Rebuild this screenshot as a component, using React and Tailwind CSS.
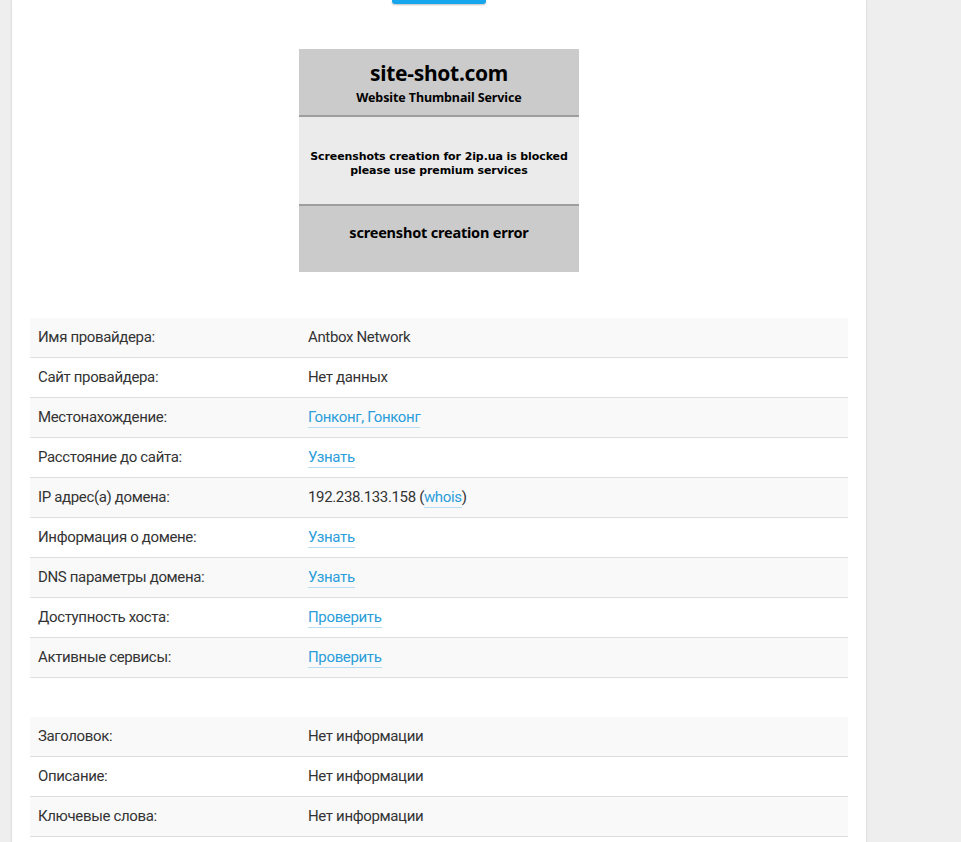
import React from 'react';

const provider = [
  ['Имя провайдера:', 'Antbox Network'],
  ['Сайт провайдера:', 'Нет данных'],
  ['Местонахождение:', { link: 'Гонконг, Гонконг' }],
  ['Расстояние до сайта:', { link: 'Узнать' }],
  ['IP адрес(а) домена:', { ip: '192.238.133.158' }],
  ['Информация о домене:', { link: 'Узнать' }],
  ['DNS параметры домена:', { link: 'Узнать' }],
  ['Доступность хоста:', { link: 'Проверить' }],
  ['Активные сервисы:', { link: 'Проверить' }],
];

const meta = [
  ['Заголовок:', 'Нет информации'],
  ['Описание:', 'Нет информации'],
  ['Ключевые слова:', 'Нет информации'],
];

function Link({ children }) {
  return (
    <a href="#" className="text-[#2b9dda] border-b border-[#b9def2] pb-[1px] leading-[18px]">
      {children}
    </a>
  );
}

function Value({ v }) {
  if (typeof v === 'string') return <span>{v}</span>;
  if (v.link) return <Link>{v.link}</Link>;
  return (
    <span>
      {v.ip} (<Link>whois</Link>)
    </span>
  );
}

function InfoTable({ rows }) {
  return (
    <div className="w-full">
      {rows.map(([label, v], i) => (
        <div key={i} className={`flex items-center h-[40px] border-b border-[#dedede] ${i % 2 === 0 ? 'bg-[#f9f9f9]' : 'bg-white'}`}>
          <div className="w-[278px] pl-[8px] shrink-0">{label}</div>
          <div className="flex-1"><Value v={v} /></div>
        </div>
      ))}
    </div>
  );
}

function Thumb() {
  return (
    <div className="w-[280px] h-[223px] flex flex-col text-black font-bold text-center" style={{ fontFamily: '"Noto Sans", "DejaVu Sans", sans-serif' }}>
      <div className="h-[68px] bg-[#cbcbcb] border-b-2 border-[#9e9e9e] flex flex-col items-center justify-center pt-[3px]">
        <div className="text-[21px] leading-[24px] tracking-[-0.3px]">site-shot.com</div>
        <div className="text-[12.5px] leading-[16px] mt-[5px] tracking-[-0.1px]">Website Thumbnail Service</div>
      </div>
      <div
        className="h-[89px] bg-[#ebebeb] border-b-2 border-[#9e9e9e] flex flex-col items-center justify-center pt-[6px] text-[11px] leading-[14px] tracking-[-0.1px]"
        style={{ fontFamily: '"DejaVu Sans", sans-serif' }}
      >
        <div>Screenshots creation for 2ip.ua is blocked</div>
        <div>please use premium services</div>
      </div>
      <div className="flex-1 bg-[#cbcbcb] flex items-start justify-center pt-[17px] text-[14.5px] leading-[18px] tracking-[-0.2px]">
        screenshot creation error
      </div>
    </div>
  );
}

export default function App() {
  return (
    <div className="min-h-screen bg-[#eeeeee]" style={{ fontFamily: 'Roboto, "Liberation Sans", sans-serif' }}>
      <div className="ml-[12px] w-[854px] min-h-screen bg-white px-[18px] pb-[20px] shadow-[0_0_2px_rgba(0,0,0,0.18)] text-[15px] text-[#333] tracking-[-0.35px]">
        <div className="flex justify-center">
          <button className="w-[94px] h-[4px] bg-[#16a6ee] rounded-b-[3px] shadow-[0_1px_2px_rgba(0,0,0,0.25)]" />
        </div>
        <div className="flex justify-center mt-[45px]">
          <Thumb />
        </div>
        <div className="mt-[46px]">
          <InfoTable rows={provider} />
        </div>
        <div className="mt-[39px]">
          <InfoTable rows={meta} />
        </div>
      </div>
    </div>
  );
}
